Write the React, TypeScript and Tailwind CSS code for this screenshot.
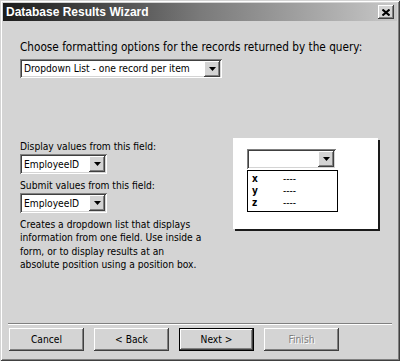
const sunken =
  'shadow-[inset_1px_1px_0_#808080,inset_-1px_-1px_0_#ffffff,inset_2px_2px_0_#404040,inset_-2px_-2px_0_#d4d4d4]'
const raised =
  'shadow-[inset_-1px_-1px_0_#404040,inset_1px_1px_0_#ffffff,inset_-2px_-2px_0_#808080,inset_2px_2px_0_#d4d4d4]'

function Arrow() {
  return (
    <div className={`flex items-center justify-center w-[16px] h-[16px] bg-[#d4d4d4] ${raised}`}>
      <svg width="7" height="4" viewBox="0 0 7 4">
        <polygon points="0,0 7,0 3.5,4" fill="#000" />
      </svg>
    </div>
  )
}

function Combo({ value, className }: { value: string; className: string }) {
  return (
    <div className={`flex items-center justify-between bg-white pl-[4px] pr-[2px] ${sunken} ${className}`}>
      <span className="whitespace-nowrap">{value}</span>
      <Arrow />
    </div>
  )
}

function Button({ label, isDefault, disabled }: { label: string; isDefault?: boolean; disabled?: boolean }) {
  return (
    <div
      className={`flex items-center justify-center w-[75px] h-[23px] bg-[#d4d4d4] ${
        isDefault
          ? 'border border-black shadow-[inset_-1px_-1px_0_#404040,inset_1px_1px_0_#ffffff,inset_-2px_-2px_0_#808080]'
          : raised
      } ${disabled ? 'text-[#808080] [text-shadow:1px_1px_0_#ffffff]' : 'text-black'}`}
    >
      {label}
    </div>
  )
}

export default function App() {
  return (
    <div className="w-[400px] h-[361px] bg-[#d4d4d4] flex flex-col p-[3px] font-['DejaVu_Sans_Condensed','Liberation_Sans',sans-serif] text-[10.2px] leading-[13px] text-black shadow-[inset_1px_1px_0_#d4d4d4,inset_-1px_-1px_0_#404040,inset_2px_2px_0_#ffffff,inset_-2px_-2px_0_#808080]">
      {/* title bar */}
      <div className="flex items-center justify-between h-[18px] bg-linear-to-r from-[#1c1c1c] via-[#7a7a7a] to-[#c8c8c8] pl-[3px] pr-[3px]">
        <span className="text-white font-bold text-[12px] leading-[18px] font-['Liberation_Sans',Arial,sans-serif]">
          Database Results Wizard
        </span>
        <div className={`flex items-center justify-center w-[16px] h-[14px] bg-[#d4d4d4] ${raised}`}>
          <svg width="8" height="7" viewBox="0 0 8 7">
            <path d="M0.5 0.5 L7.5 6.5 M7.5 0.5 L0.5 6.5" stroke="#000" strokeWidth="2" />
          </svg>
        </div>
      </div>

      {/* body */}
      <div className="flex-1 flex flex-col pl-[17px] pt-[20px]">
        <div className="whitespace-nowrap text-[11.7px]">
          Choose formatting options for the records returned by the query:
        </div>
        <Combo value="Dropdown List - one record per item" className="mt-[5px] w-[202px] h-[19px]" />

        <div className="flex items-start mt-[62px]">
          <div className="w-[200px] flex flex-col">
            <div>Display values from this field:</div>
            <Combo value="EmployeeID" className="mt-[1px] w-[87px] h-[20px]" />
            <div className="mt-[5px]">Submit values from this field:</div>
            <Combo value="EmployeeID" className="mt-[1px] w-[87px] h-[20px]" />
            <div className="mt-[5px] leading-[13.33px] whitespace-nowrap">
              Creates a dropdown list that displays
              <br />
              information from one field. Use inside a
              <br />
              form, or to display results at an
              <br />
              absolute position using a position box.
            </div>
          </div>

          {/* preview */}
          <div className="ml-[13px] mt-[-2px] w-[145px] h-[91px] bg-white shadow-[2px_2px_0_#1a1a1a] pt-[11px] pl-[14px]">
            <div className={`flex items-center justify-end w-[89px] h-[20px] bg-white pr-[2px] ${sunken}`}>
              <Arrow />
            </div>
            <div className="mt-[1px] w-[91px] h-[42px] border border-black pl-[4px] pt-[2px] text-[10px] leading-[12px] font-bold">
              {['x', 'y', 'z'].map((k) => (
                <div key={k} className="flex">
                  <span className="w-[31px]">{k}</span>
                  <span className="font-normal">----</span>
                </div>
              ))}
            </div>
          </div>
        </div>
      </div>

      {/* footer */}
      <div className="mx-[5px] h-[2px] border-t border-[#808080] border-b border-b-white" />
      <div className="flex gap-[10px] pl-[6px] mt-[3px] mb-[7px]">
        <Button label="Cancel" />
        <Button label="< Back" />
        <Button label="Next >" isDefault />
        <Button label="Finish" disabled />
      </div>
    </div>
  )
}
